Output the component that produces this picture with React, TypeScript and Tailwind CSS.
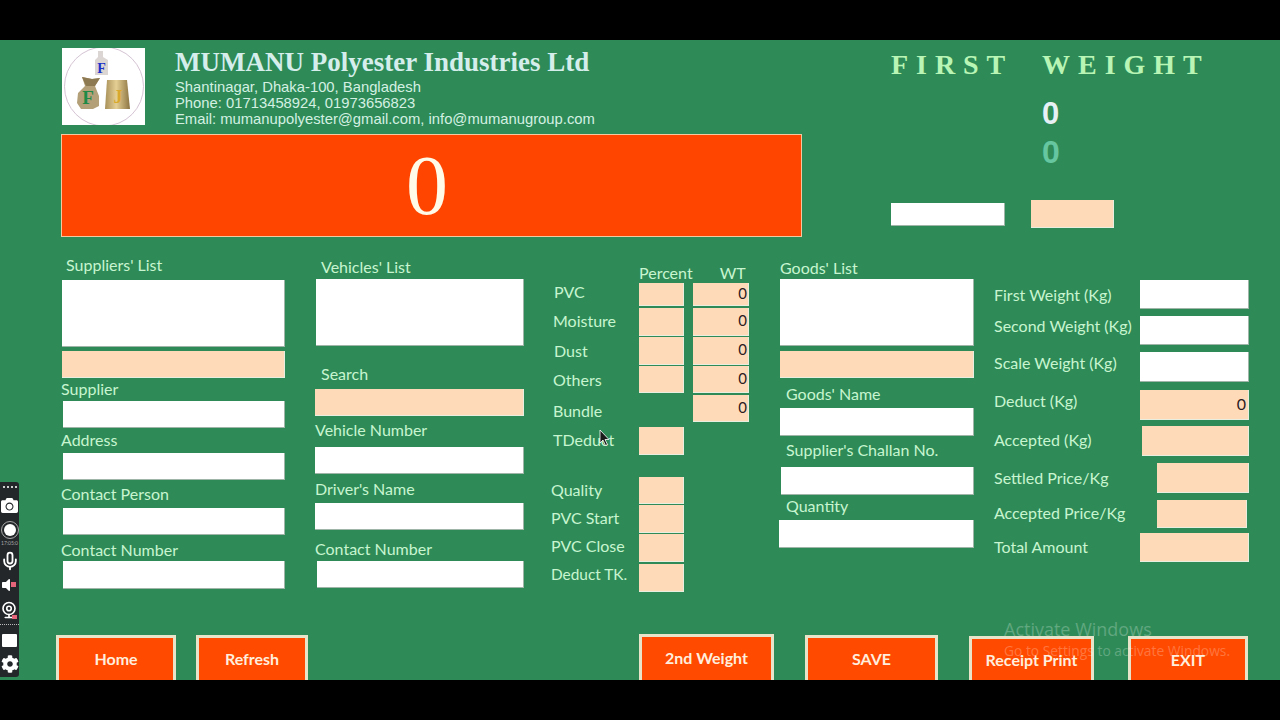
import React from 'react';
import { Mic, Webcam } from 'lucide-react';
import { FaCamera, FaCog, FaVolumeOff } from 'react-icons/fa';

const white = 'box-border bg-white border-b border-r border-[#9fb5a8]';
const peach = 'box-border bg-[#ffdab9] border-b border-r border-[#e9efe0]';
const label = 'h-5 flex items-center whitespace-nowrap';

const deductRows = [
  { name: 'PVC', row: 'h-[23px]', text: 'pl-[3px] pb-[5px]', pct: true, wt: true },
  { name: 'Moisture', row: 'mt-[2px] h-[28px]', text: 'pl-[2px] pb-[2px]', pct: true, wt: true },
  { name: 'Dust', row: 'mt-px h-[28px]', text: 'pl-[3px]', pct: true, wt: true },
  { name: 'Others', row: 'mt-px h-[27px]', text: 'pl-[2px]', pct: true, wt: true },
  { name: 'Bundle', row: 'mt-[2px] h-[27px]', text: 'pl-[2px] pt-[5px]', pct: false, wt: true },
  { name: 'TDeduct', row: 'mt-[5px] h-[28px]', text: 'pl-[2px] pb-[2px]', pct: true, wt: false },
  { name: 'Quality', row: 'mt-[22px] h-[27px]', text: 'pb-px', pct: true, wt: false },
  { name: 'PVC Start', row: 'mt-px h-[28px]', text: 'pb-[2px]', pct: true, wt: false },
  { name: 'PVC Close', row: 'mt-px h-[28px]', text: 'pb-[4px]', pct: true, wt: false },
  { name: 'Deduct TK.', row: 'mt-[2px] h-[28px]', text: 'pb-[6px] text-[15.4px]', pct: true, wt: false },
];

const weightRows = [
  { name: 'First Weight (Kg)', row: 'mt-[25px] h-[29px]', text: '', box: `${white} w-[109px]` },
  { name: 'Second Weight (Kg)', row: 'mt-[7px] h-[29px]', text: 'pb-[9px]', box: `${white} w-[109px]` },
  { name: 'Scale Weight (Kg)', row: 'mt-[7px] h-[30px]', text: 'pb-[8px]', box: `${white} w-[109px]` },
  { name: 'Deduct (Kg)', row: 'mt-[8px] h-[30px]', text: 'pb-[8px]', box: `${peach} w-[109px]`, value: '0' },
  { name: 'Accepted (Kg)', row: 'mt-[6px] h-[30px]', text: 'pb-[2px]', box: `${peach} w-[107px]` },
  { name: 'Settled Price/Kg', row: 'mt-[7px] h-[30px]', text: '', box: `${peach} w-[92px]` },
  { name: 'Accepted Price/Kg', row: 'mt-[7px] h-[28px]', text: 'pb-[2px]', box: `${peach} w-[90px] mr-[2px]` },
  { name: 'Total Amount', row: 'mt-[5px] h-[29px]', text: 'pb-px', box: `${peach} w-[109px]` },
];

function Logo() {
  return (
    <svg viewBox="0 0 83 77" className="w-[83px] h-[77px] bg-white shrink-0">
      <defs>
        <linearGradient id="cone" x1="0" y1="0" x2="1" y2="0">
          <stop offset="0" stopColor="#a8905a" />
          <stop offset="0.45" stopColor="#e6cf93" />
          <stop offset="1" stopColor="#8b7442" />
        </linearGradient>
      </defs>
      <circle cx="42" cy="38.5" r="39.5" fill="none" stroke="#c9b4c8" strokeWidth="0.8" />
      <path d="M36 3 L41 3 L41 9 L46 12 L46 27 L33 27 L33 12 L36 9 Z" fill="#dbd6d4" />
      <text x="39.5" y="25" textAnchor="middle" fontFamily="Liberation Serif" fontWeight="700" fontSize="14" fill="#1c2fc8">F</text>
      <path d="M20 29 L30 31 L38 30 L33 38 L37 48 L37 58 L31 61 L19 61 L15 55 L16 45 L23 38 Z" fill="#b3a079" />
      <path d="M20 29 L30 31 L38 30 L33 38 L24 38 Z" fill="#8e7a52" />
      <text x="26" y="56" textAnchor="middle" fontFamily="Liberation Serif" fontWeight="700" fontSize="19" fill="#1f8a45">F</text>
      <path d="M45 32 L65 32 L68 61 L43 61 Z" fill="url(#cone)" />
      <text x="56" y="55" textAnchor="middle" fontFamily="Liberation Serif" fontWeight="700" fontSize="18" fill="#d9a92e">J</text>
    </svg>
  );
}

function RecorderBar() {
  return (
    <div className="absolute left-0 top-[442px] w-[19px] h-[195px] bg-[#23272a] rounded-r-[3px] flex flex-col items-center text-white overflow-hidden">
      <div className="mt-[4px] h-[4px] w-[14px] border-t-2 border-dotted border-[#cfcfcf]" />
      <FaCamera size={17} className="mt-[7px] shrink-0" />
      <div className="mt-[7px] w-[18px] h-[18px] shrink-0 rounded-full border border-[#aaaaaa] flex items-center justify-center">
        <div className="w-[12px] h-[12px] rounded-full bg-white" />
      </div>
      <div className="mt-px h-[7px] text-[5px] leading-[7px] text-[#aaaaaa] whitespace-nowrap">17:05:0</div>
      <Mic size={20} strokeWidth={2.2} className="mt-[4px] shrink-0" />
      <div className="relative mt-[6px] w-[19px] h-[16px] shrink-0">
        <FaVolumeOff size={16} className="ml-[-2px]" />
        <div className="absolute right-[3px] top-[5px] w-[5px] h-[5px] bg-[#e4647a]" />
      </div>
      <div className="relative mt-[8px] w-[19px] h-[18px] shrink-0">
        <Webcam size={18} strokeWidth={2.2} />
        <div className="absolute right-[2px] bottom-0 w-[5px] h-[4px] bg-[#e4647a]" />
      </div>
      <div className="mt-[5px] w-[19px] border-t border-dotted border-[#bbbbbb]" />
      <div className="mt-[9px] w-[15px] h-[13px] shrink-0 bg-white rounded-[1px]" />
      <FaCog size={18} className="mt-[8px] shrink-0" />
    </div>
  );
}

function BottomButton({ text, className }: { text: string; className: string }) {
  return (
    <div className={`box-border h-[60px] shrink-0 bg-[#ff4a00] border-[3px] border-[#e8e4c9] flex justify-center pt-[11px] text-[16px] leading-5 font-bold text-[#ffeedd] ${className}`}>
      {text}
    </div>
  );
}

export default function App() {
  return (
    <div className="w-[1280px] h-[720px] bg-black overflow-hidden font-['Lato','Liberation_Sans',sans-serif]">
      <div className="relative mt-10 h-[640px] bg-[#2e8b57] overflow-hidden text-[16px] text-[#c8f5d0]">
        {/* header */}
        <div className="flex h-[197px] pl-[61px]">
          <div className="w-[741px] shrink-0 pt-2">
            <div className="flex h-[86px] pl-px">
              <Logo />
              <div className="ml-[30px] font-['Liberation_Sans',sans-serif] text-[14.8px] leading-4 text-[#d4f0e2]">
                <div className="h-[31px] font-['Liberation_Serif',serif] text-[27px] leading-[29px] font-bold text-[#d5eeec] whitespace-nowrap">
                  MUMANU Polyester Industries Ltd
                </div>
                <div>Shantinagar, Dhaka-100, Bangladesh</div>
                <div>Phone: 01713458924, 01973656823</div>
                <div className="whitespace-nowrap">Email: mumanupolyester@gmail.com, info@mumanugroup.com</div>
              </div>
            </div>
            <div className="h-[103px] box-border bg-[#ff4500] border border-[#f3c9a0] flex items-center justify-center pr-[9px] font-['Liberation_Serif',serif] text-[84px] text-[#fffbe8]">
              0
            </div>
          </div>
          <div className="ml-[88px] w-[330px] shrink-0">
            <div className="mt-[9px] ml-px h-8 font-['Liberation_Serif',serif] text-[28px] leading-8 font-bold tracking-[7.95px] text-[#b9f5b5] whitespace-pre">
              FIRST  WEIGHT
            </div>
            <div className="mt-[14px] ml-[152px] h-[38px] font-['Liberation_Sans',sans-serif] text-[31px] leading-[38px] font-bold text-[#e6f0f5]">0</div>
            <div className="mt-[-1px] ml-[152px] h-[38px] font-['Liberation_Sans',sans-serif] text-[32px] leading-[40px] font-bold text-[#66c6a0]">0</div>
            <div className="mt-[30px] flex items-center">
              <div className={`${white} w-[114px] h-[23px] ml-px`} />
              <div className={`${peach} w-[83px] h-[28px] ml-[26px]`} />
            </div>
          </div>
        </div>

        {/* form columns */}
        <div className="flex h-[378px] mt-[18px] pl-[61px]">
          <div className="w-[224px] shrink-0">
            <div className={`${label} pl-[5px]`}>Suppliers' List</div>
            <div className={`${white} mt-[5px] ml-px h-[67px]`} />
            <div className={`${peach} mt-[4px] ml-px h-[27px]`} />
            <div className={`${label} mt-px`}>Supplier</div>
            <div className={`${white} mt-[2px] ml-[2px] h-[27px]`} />
            <div className={`${label} mt-[2px]`}>Address</div>
            <div className={`${white} mt-[3px] ml-[2px] h-[27px]`} />
            <div className={`${label} mt-[4px]`}>Contact Person</div>
            <div className={`${white} mt-[4px] ml-[2px] h-[27px]`} />
            <div className={`${label} mt-[5px]`}>Contact Number</div>
            <div className={`${white} mt-px ml-[2px] h-[28px]`} />
          </div>

          <div className="w-[209px] ml-[30px] shrink-0">
            <div className={`${label} mt-[2px] pl-[6px]`}>Vehicles' List</div>
            <div className={`${white} mt-[2px] ml-px h-[67px]`} />
            <div className={`${label} mt-[18px] pl-[6px]`}>Search</div>
            <div className={`${peach} mt-[5px] h-[27px]`} />
            <div className={`${label} mt-[4px]`}>Vehicle Number</div>
            <div className={`${white} mt-[7px] h-[27px]`} />
            <div className={`${label} mt-[5px]`}>Driver's Name</div>
            <div className={`${white} mt-[4px] h-[27px]`} />
            <div className={`${label} mt-[9px]`}>Contact Number</div>
            <div className={`${white} mt-[2px] ml-[2px] h-[27px]`} />
          </div>

          <div className="w-[199px] ml-[27px] shrink-0">
            <div className={`${label} mt-[8px]`}>
              <span className="ml-[88px]">Percent</span>
              <span className="ml-[27px]">WT</span>
            </div>
            {deductRows.map((r) => (
              <div key={r.name} className={`flex ${r.row}`}>
                <div className={`w-[88px] flex items-center whitespace-nowrap ${r.text}`}>{r.name}</div>
                <div className={`w-[45px] ${r.pct ? peach : ''}`} />
                {r.wt && (
                  <div className={`${peach} w-[56px] ml-[9px] pb-[2px] pr-px flex items-center justify-end text-[15px] text-[#2b1b22]`}>0</div>
                )}
              </div>
            ))}
          </div>

          <div className="w-[195px] ml-[29px] shrink-0">
            <div className={`${label} mt-[3px] pl-px`}>Goods' List</div>
            <div className={`${white} mt-px ml-px h-[67px]`} />
            <div className={`${peach} mt-[5px] ml-px h-[27px]`} />
            <div className={`${label} mt-[6px] pl-[7px]`}>Goods' Name</div>
            <div className={`${white} mt-[4px] ml-px h-[28px]`} />
            <div className={`${label} mt-[4px] pl-[7px]`}>Supplier's Challan No.</div>
            <div className={`${white} mt-[7px] ml-[2px] h-[28px]`} />
            <div className={`${label} mt-px pl-[7px]`}>Quantity</div>
            <div className={`${white} mt-[4px] h-[28px]`} />
          </div>

          <div className="w-[256px] ml-[19px] shrink-0">
            {weightRows.map((r) => (
              <div key={r.name} className={`flex justify-between ${r.row}`}>
                <div className={`pl-px flex items-center whitespace-nowrap ${r.text}`}>{r.name}</div>
                <div className={`${r.box} pr-[2px] text-right text-[16px] leading-[28px] text-[#2b1b22]`}>{r.value}</div>
              </div>
            ))}
          </div>
        </div>

        {/* action buttons */}
        <div className="flex mt-[1px] pl-[56px]">
          <BottomButton text="Home" className="w-[120px] mt-px" />
          <BottomButton text="Refresh" className="w-[112px] ml-[20px] mt-px" />
          <BottomButton text="2nd Weight" className="w-[135px] ml-[331px]" />
          <BottomButton text="SAVE" className="w-[133px] ml-[31px] mt-px" />
          <BottomButton text="Receipt Print" className="w-[125px] ml-[31px] mt-[2px]" />
          <BottomButton text="EXIT" className="w-[120px] ml-[34px] mt-[2px]" />
        </div>

        <RecorderBar />

        {/* watermark */}
        <div className="absolute left-[1004px] top-[578px] pointer-events-none text-white/25 whitespace-nowrap font-['Open_Sans',sans-serif]">
          <div className="text-[18px] leading-[22px]">Activate Windows</div>
          <div className="text-[13.8px] leading-[21px]">Go to Settings to activate Windows.</div>
        </div>

        {/* mouse pointer */}
        <svg viewBox="0 0 12 18" className="absolute left-[599px] top-[389px] w-[12px] h-[18px]">
          <path d="M1 1 L1 14 L4 11 L6.5 16.5 L8.5 15.5 L6 10.5 L10 10.5 Z" fill="#1a1a1a" stroke="#ffffff" strokeWidth="0.8" />
        </svg>
      </div>
    </div>
  );
}
